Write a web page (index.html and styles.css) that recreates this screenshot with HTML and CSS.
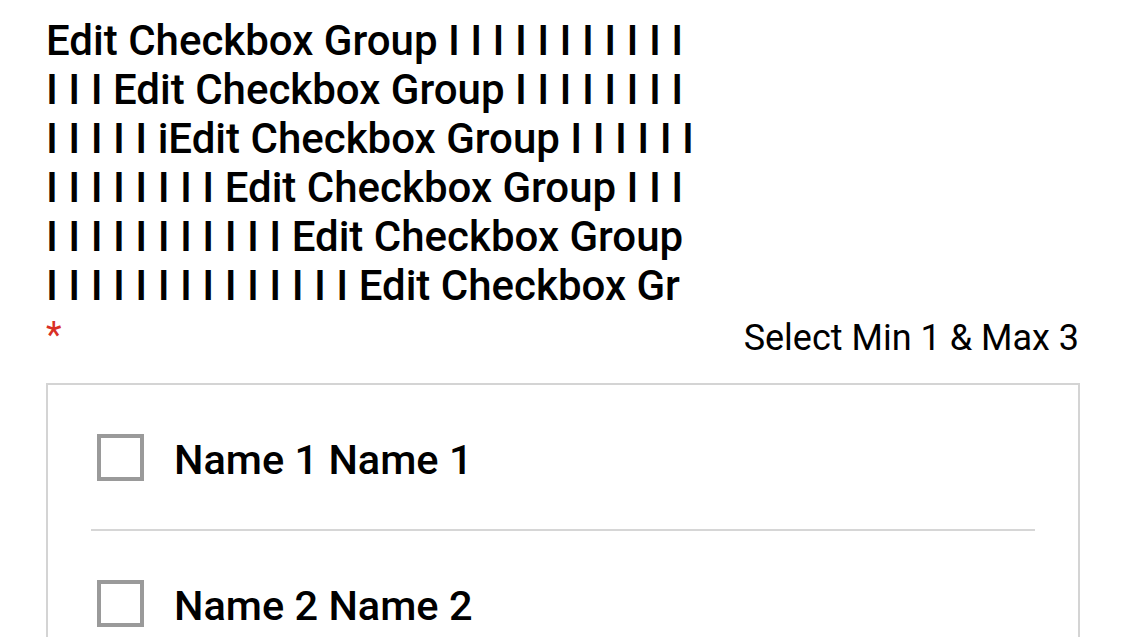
FILE: index.html
```html
<html>
  <head>
    <title>Edit Checkbox Group</title>
    <meta charset="UTF-8" />
    <meta name="viewport" content="width=device-width, initial-scale=1.0" />
    <link rel="stylesheet" href="styles.css">
  </head>

  <body>
    <div class="form-field">
      <h1 class="field-title">
        <span class="line">Edit Checkbox Group I I I I I I I I I I I</span>
        <span class="line">I I I Edit Checkbox Group I I I I I I I I</span>
        <span class="line">I I I I I iEdit Checkbox Group I I I I I I</span>
        <span class="line">I I I I I I I I Edit Checkbox Group I I I</span>
        <span class="line">I I I I I I I I I I I Edit Checkbox Group</span>
        <span class="line">I I I I I I I I I I I I I I Edit Checkbox Gr</span>
      </h1>

      <div class="field-meta">
        <span class="required">*</span>
        <span class="hint">Select Min 1 &amp; Max 3</span>
      </div>

      <div class="options">
        <label class="option">
          <span class="box"></span>
          <span class="option-label">Name 1 Name 1</span>
        </label>
        <label class="option">
          <span class="box"></span>
          <span class="option-label">Name 2 Name 2</span>
        </label>
      </div>
    </div>
  </body>
</html>
```

FILE: styles.css
```css
body {
  margin: 0;
  font-family: Roboto, "Liberation Sans", sans-serif;
  color: #000000;
  background: #ffffff;
  overflow: hidden;
}

.form-field {
  width: 1034px;
  padding: 16px 0 0 46px;
}

.field-title {
  margin: 0;
  font-size: 42px;
  font-weight: 500;
  line-height: 49px;
}

.field-title .line {
  display: block;
  white-space: nowrap;
}

.field-meta {
  display: flex;
  justify-content: space-between;
  align-items: flex-start;
  height: 73px;
}

.required {
  color: #d93025;
  font-size: 36px;
  line-height: 40px;
  margin-top: 5px;
}

.hint {
  font-size: 36px;
  line-height: 40px;
  margin-top: 8px;
  padding-right: 1px;
}

.options {
  border: 2px solid #d4d4d4;
  border-bottom: none;
  padding: 0 43px;
}

.option {
  display: flex;
  align-items: center;
  gap: 30px;
  height: 144px;
  padding-left: 6px;
  border-bottom: 2px solid #d6d6d6;
}

.box {
  width: 39px;
  height: 39px;
  border: 4px solid #9a9a9a;
  flex-shrink: 0;
}

.option-label {
  font-size: 41.5px;
  font-weight: 500;
  padding-top: 4px;
}
```
